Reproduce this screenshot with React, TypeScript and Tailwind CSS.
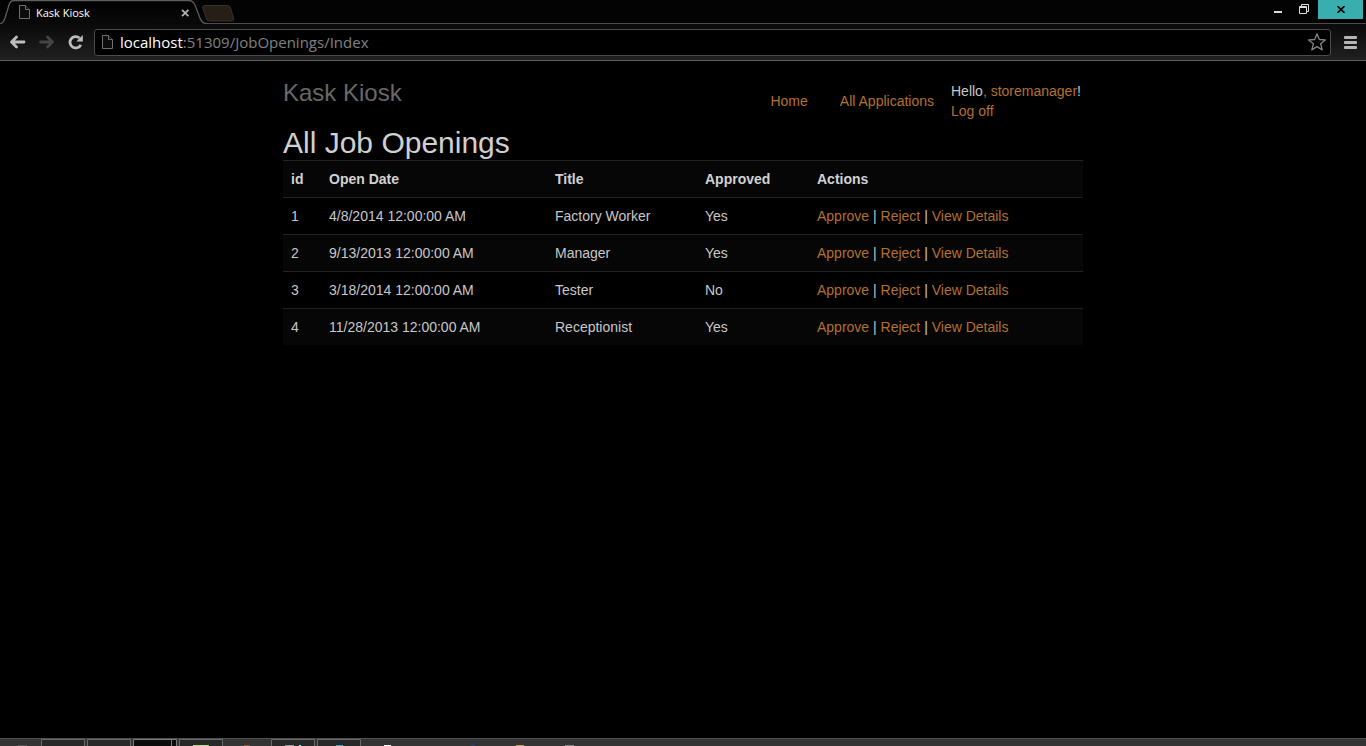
import React from "react";

type Opening = { id: number; date: string; title: string; approved: string };

const openings: Opening[] = [
  { id: 1, date: "4/8/2014 12:00:00 AM", title: "Factory Worker", approved: "Yes" },
  { id: 2, date: "9/13/2013 12:00:00 AM", title: "Manager", approved: "Yes" },
  { id: 3, date: "3/18/2014 12:00:00 AM", title: "Tester", approved: "No" },
  { id: 4, date: "11/28/2013 12:00:00 AM", title: "Receptionist", approved: "Yes" },
];

const actions = ["Approve", "Reject", "View Details"];

function PageIcon() {
  return (
    <svg width="12" height="16" viewBox="0 0 12 16" fill="#0c0c0c" stroke="#707070" className="shrink-0" aria-hidden="true">
      <path d="M.5 1.500H6.500L10.500 5.500V14.500H.5z" />
      <path d="M6.500 1.500V5.500h4" />
    </svg>
  );
}

function TabStrip() {
  return (
    <div className="flex h-6 items-start bg-[#030303]">
      <div className="grid h-6 w-[206px] shrink-0">
        <svg width="206" height="24" viewBox="0 0 206 24" className="[grid-area:1/1]" aria-hidden="true">
          <defs>
            <linearGradient id="tab" x1="0" y1="0" x2="0" y2="1">
              <stop offset="0" stopColor="#000" />
              <stop offset="1" stopColor="#0a0a0a" />
            </linearGradient>
          </defs>
          <path
            d="M0 24C3 23.500 4 21 5 18L9 5C10 2 11 .5 14 .5H189C192 .5 193.500 2 195 5L200 18C201.500 22 203 23.500 206 23.500"
            fill="url(#tab)"
            stroke="#5e5e5e"
            strokeWidth="1.300"
          />
        </svg>
        <div className="flex h-6 items-center gap-[5px] pr-4 pl-[19px] [grid-area:1/1]">
          <PageIcon />
          <span className="flex-1 pt-px font-['Open_Sans','Noto_Sans',sans-serif] text-[11px] leading-4 text-white">Kask Kiosk</span>
          <button type="button" aria-label="Close tab" className="pt-px">
            <svg width="9" height="8" viewBox="0 0 9 8" stroke="#b4b4b4" strokeWidth="1.700" aria-hidden="true">
              <path d="M1 .8l6.400 6.400M7.400 .8L1 7.200" />
            </svg>
          </button>
        </div>
      </div>
      <div className="flex h-6 flex-1 border-b border-[#4c4c4c]">
        <button type="button" aria-label="New tab" className="-ml-1 h-[22px] pt-[5px]">
          <svg width="33" height="17" viewBox="0 0 33 17" fill="#261f18" stroke="#38332d" aria-hidden="true">
            <path d="M3 .5H25C27 .5 28 1.500 28.500 3L31.500 13C32 15 31.500 16 29.500 16H8C6 16 5 15 4.500 14L.8 3C.3 1.500 1 .5 3 .5z" />
          </svg>
        </button>
        <div className="flex-1" />
        <button type="button" aria-label="Minimize" className="flex h-5 w-[26px] items-center justify-center">
          <svg width="8" height="10" viewBox="0 0 8 10" aria-hidden="true">
            <path d="M0 6h8v2H0z" fill="#ddd" />
          </svg>
        </button>
        <button type="button" aria-label="Restore" className="flex h-[18px] w-[26px] items-center justify-center">
          <svg width="10" height="10" viewBox="0 0 10 10" fill="none" stroke="#ddd" aria-hidden="true">
            <path d="M2.500 2V.5h7v7H8" />
            <path d="M.5 2.500h7v7h-7z" />
            <path d="M1 3.500h6" />
          </svg>
        </button>
        <button type="button" aria-label="Close" className="mr-[3px] ml-px flex h-[19px] w-[45px] items-center justify-center bg-[#38aeae]">
          <svg width="8" height="7" viewBox="0 0 8 7" stroke="#000" strokeWidth="1.600" aria-hidden="true">
            <path d="M.5 0l7 7M7.500 0l-7 7" />
          </svg>
        </button>
      </div>
    </div>
  );
}

function Toolbar() {
  return (
    <div className="flex h-[37px] items-center border-b border-[#5c5c5c] bg-linear-to-b from-[#0a0a0a] to-[#202020] pr-[9px] pl-[9px]">
      <button type="button" aria-label="Back" className="shrink-0">
        <svg width="17" height="14" viewBox="0 0 17 14" fill="none" stroke="#bdbdbd" strokeWidth="2.800" strokeLinecap="round" strokeLinejoin="round" aria-hidden="true">
          <path d="M7.500 2L2.500 7L7.500 12M3 7H15" />
        </svg>
      </button>
      <button type="button" aria-label="Forward" className="ml-3 shrink-0">
        <svg width="17" height="14" viewBox="0 0 17 14" fill="none" stroke="#444" strokeWidth="2.800" strokeLinecap="round" strokeLinejoin="round" aria-hidden="true">
          <path d="M9.500 2L14.500 7L9.500 12M14 7H2.500" />
        </svg>
      </button>
      <button type="button" aria-label="Reload" className="ml-3 shrink-0">
        <svg width="17" height="16" viewBox="0 0 17 16" aria-hidden="true">
          <path d="M13.800 10.800A5.700 5.700 0 1 1 12.500 4" fill="none" stroke="#bdbdbd" strokeWidth="2.800" />
          <path d="M15.800 1V7.500H9.300z" fill="#bdbdbd" />
        </svg>
      </button>
      <form className="ml-2.5 flex h-[27px] flex-1 items-center rounded-[3px] border border-[#4b4b4b] bg-black pr-1 pl-[7px]">
        <PageIcon />
        <label className="ml-1.5 grid flex-1 font-['Open_Sans','Noto_Sans',sans-serif] text-[15px] leading-6">
          <span className="pointer-events-none [grid-area:1/1] text-[#808080]" aria-hidden="true">
            <span className="text-white">localhost</span>:51309/JobOpenings/Index
          </span>
          <input
            aria-label="Address"
            defaultValue="localhost:51309/JobOpenings/Index"
            className="w-full bg-transparent text-transparent outline-none [grid-area:1/1]"
          />
        </label>
        <button type="button" aria-label="Bookmark this page" className="shrink-0">
          <svg width="18" height="18" viewBox="0 0 18 18" fill="none" stroke="#858585" strokeWidth="1.300" strokeLinejoin="round" aria-hidden="true">
            <path d="M9 .8L11.300 6.500L17.300 6.900L12.600 10.800L14.200 16.900L9 13.600L3.800 16.900L5.400 10.800L.7 6.900L6.700 6.500z" />
          </svg>
        </button>
      </form>
      <button type="button" aria-label="Menu" className="ml-3 shrink-0">
        <svg width="14" height="14" viewBox="0 0 14 14" fill="#b5b5b5" aria-hidden="true">
          <rect width="13" height="3" x="1" y="1" rx="1" />
          <rect width="13" height="3" x="1" y="6" rx="1" />
          <rect width="13" height="3" x="1" y="11" rx="1" />
        </svg>
      </button>
    </div>
  );
}

function Link({ children }: { children: React.ReactNode }) {
  return (
    <a href="#" className="text-[#b3702f]">
      {children}
    </a>
  );
}

function OpeningsTable() {
  const cell = "border-t border-[#222] px-2 py-2 text-left";
  return (
    <table className="w-full table-fixed border-separate border-spacing-0">
      <colgroup>
        <col className="w-[38px]" />
        <col className="w-[226px]" />
        <col className="w-[150px]" />
        <col className="w-[112px]" />
        <col />
      </colgroup>
      <thead>
        <tr className="bg-[#060606] text-[#d2d2d2]">
          {["id", "Open Date", "Title", "Approved", "Actions"].map((name) => (
            <th key={name} scope="col" className={cell}>
              {name}
            </th>
          ))}
        </tr>
      </thead>
      <tbody>
        {openings.map((o) => (
          <tr key={o.id} className="even:bg-[#060606]">
            <td className={cell}>{o.id}</td>
            <td className={cell}>{o.date}</td>
            <td className={cell}>{o.title}</td>
            <td className={cell}>{o.approved}</td>
            <td className={cell}>
              {actions.map((action, i) => (
                <React.Fragment key={action}>
                  {i > 0 && " | "}
                  <Link>{action}</Link>
                </React.Fragment>
              ))}
            </td>
          </tr>
        ))}
      </tbody>
    </table>
  );
}

function Taskbar() {
  return (
    <footer className="h-2 overflow-hidden border-t border-[#505050] bg-[#343434]">
      <svg width="600" height="7" viewBox="0 0 600 7" aria-hidden="true">
        <g fill="#282828" stroke="#686868">
          <path d="M41.500 8V.5h43V8M87.500 8V.5h43V8" />
          <path d="M179.500 8V.5h43V8M271.500 8V.5h43V8M317.500 8V.5h43V8" />
          <path d="M133.500 8V.5h43V8M171.500 .5V8" fill="#0c0c0c" stroke="#7a7a7a" />
        </g>
        <path d="M18 6h9v1h-9z" fill="#555" />
        <path d="M193 6h16v1h-16z" fill="#b8e08c" />
        <path d="M244 6h6v1h-6z" fill="#a4522e" />
        <path d="M285 6h9v1h-9z" fill="#999" />
        <path d="M299 6h2v1h-2z" fill="#8ff" />
        <path d="M336 6h7v1h-7z" fill="#38a9c9" />
        <path d="M384 6h7v1h-7z" fill="#fff" />
        <path d="M470 6h5v1h-5z" fill="#363b80" />
        <path d="M516 6h8v1h-8z" fill="#dba25c" />
        <path d="M565 6h9v1h-9z" fill="#888" />
      </svg>
    </footer>
  );
}

export default function App() {
  return (
    <div className="flex min-h-screen flex-col bg-black font-['Liberation_Sans',Arial,sans-serif] text-sm text-[#c8c8c8]">
      <TabStrip />
      <Toolbar />
      <main className="mx-auto w-full max-w-[800px] flex-1 pt-5">
        <header className="flex items-start justify-between">
          <p className="text-2xl leading-6 text-[#686868]">Kask Kiosk</p>
          <div className="flex">
            <nav className="flex gap-8 pt-2.5 pr-[17px]">
              <Link>Home</Link>
              <Link>All Applications</Link>
            </nav>
            <div className="min-w-[132px]">
              <p>
                Hello<Link>, storemanager</Link>!
              </p>
              <p>
                <Link>Log off</Link>
              </p>
            </div>
          </div>
        </header>
        <h1 className="mt-1.5 pb-0.5 text-3xl leading-[31px] text-[#d0d0d0]">All Job Openings</h1>
        <OpeningsTable />
      </main>
      <Taskbar />
    </div>
  );
}
